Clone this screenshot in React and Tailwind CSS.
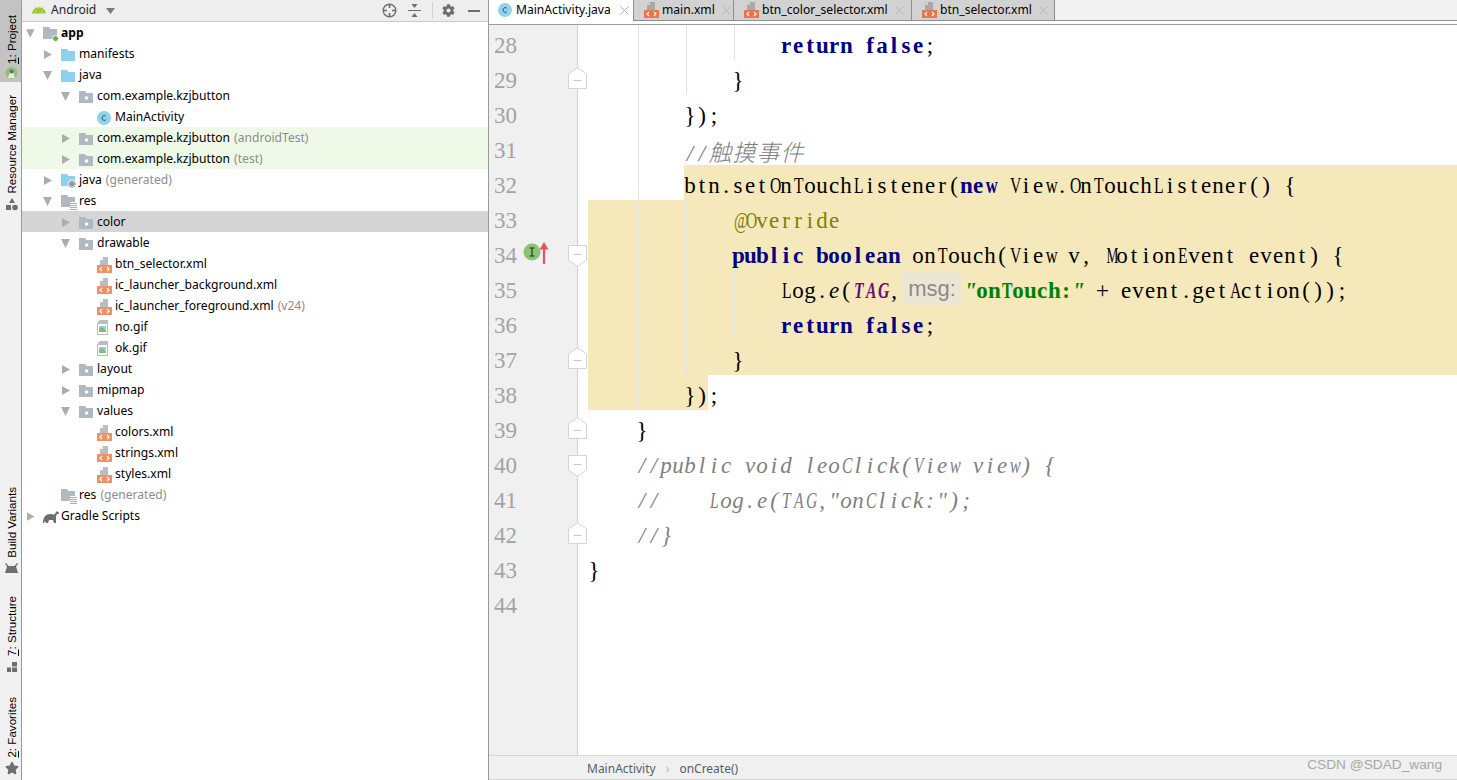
import React from "react";
import { FaAndroid, FaCog, FaStar } from "react-icons/fa";

const KW = "font-bold text-[#000080]";
const ANN = "text-[#808000]";
const STR = "font-bold text-[#008000]";
const FLD = "font-bold italic text-[#660e7a]";
const MTH = "italic";
const CMT = "italic text-[#808080]";

const WIDE = new Set("OTAGLVEDCRN@UHKQXYZ".split(""));

function narrow(c) {
  if (c === "M") return "scale-x-[0.58]";
  if (c === "W") return "scale-x-[0.55]";
  if (c === "m") return "scale-x-[0.66]";
  if (c === "w") return "scale-x-[0.72]";
  if (c === '"') return "italic";
  if (WIDE.has(c)) return "scale-x-[0.68]";
  return "";
}

function Ch({ c }) {
  const cjk = c.charCodeAt(0) > 0x2e80;
  if (cjk) return <span className="inline-block w-[24px] text-center font-['Noto_Sans_CJK_SC',serif] text-[23px] font-light">{c}</span>;
  return <span className={"inline-block w-[12px] text-center " + narrow(c)}>{c === " " ? "\u00a0" : c}</span>;
}

function T({ s, k = "" }) {
  return <span className={k}>{s.split("").map((c, i) => <Ch key={i} c={c} />)}</span>;
}

const Hint = () => (
  <span className="inline-block h-[33px] w-[60px] ml-[2px] mr-[2px] rounded-[3px] bg-[#ebe7d3] text-center align-top mt-[2px] font-['Liberation_Sans',sans-serif] text-[22px] leading-[33px] text-[#8a8a8a]">msg:</span>
);

const lines = [
  { n: 28, g: [60, 108, 156], t: [["                "], ["return false", KW], [";"]] },
  { n: 29, g: [60, 108], f: "up", t: [["            }"]] },
  { n: 30, g: [60], t: [["        });"]] },
  { n: 31, g: [60], t: [["        "], ["//触摸事件", CMT]] },
  { n: 32, g: [60], sel: "from", t: [["btn.setOnTouchListener("], ["new", KW], [" View.OnTouchListener() {"]] },
  { n: 33, g: [60, 108], sel: "full", t: [["            "], ["@Override", ANN]] },
  { n: 34, g: [60, 108], sel: "full", f: "down", mark: true, t: [["            "], ["public boolean", KW], [" onTouch(View v, MotionEvent event) {"]] },
  { n: 35, g: [60, 108, 156], sel: "full", t: [["                Log."], ["e", MTH], ["("], ["TAG", FLD], [","], "hint", ["\"onTouch:\"", STR], [" + event.getAction());"]] },
  { n: 36, g: [60, 108, 156], sel: "full", t: [["                "], ["return false", KW], [";"]] },
  { n: 37, g: [60, 108], sel: "full", f: "up", t: [["            }"]] },
  { n: 38, g: [60], sel: "short", t: [["        });"]] },
  { n: 39, g: [], f: "up", t: [["    }"]] },
  { n: 40, g: [], f: "down", t: [["    "], ["//public void leoClick(View view) {", CMT]] },
  { n: 41, g: [], t: [["    "], ["//    Log.e(TAG,\"onClick:\");", CMT]] },
  { n: 42, g: [], f: "up", t: [["    "], ["//}", CMT]] },
  { n: 43, g: [], t: [["}"]] },
  { n: 44, g: [], t: [[""]] },
];

const Fold = ({ dir }) => (
  <svg className={"absolute left-[79px] w-[19px] h-[22px] " + (dir === "up" ? "top-[7px]" : "top-[10px]")} viewBox="0 0 19 22">
    {dir === "up"
      ? <path d="M.5 21.5V7L9.5.7 18.5 7v14.5z" fill="#fff" stroke="#d4d4d4" />
      : <path d="M.5.5V15l9 6.3 9-6.3V.5z" fill="#fff" stroke="#d4d4d4" />}
    <path d={dir === "up" ? "M5.5 13.5h8" : "M5.5 9.5h8"} stroke="#c8c8c8" />
  </svg>
);

const RunMark = () => (
  <svg className="w-[27px] h-[24px]" viewBox="0 0 27 24">
    <circle cx="9" cy="11" r="8.5" fill="#8cc474" />
    <path d="M6.5 7h5M6.5 15h5M9 7v8" stroke="#3f5a38" strokeWidth="1.6" />
    <path d="M21 23V6" stroke="#e0575f" strokeWidth="2.2" />
    <path d="M16.5 8.5L21 1l4.5 7.5z" fill="#e0575f" />
  </svg>
);

function Row({ l }) {
  const content = (
    <div className="whitespace-nowrap">
      {l.t.map((p, i) => p === "hint" ? <Hint key={i} /> : <T key={i} s={p[0]} k={p[1] || ""} />)}
    </div>
  );
  let code;
  if (l.sel === "from") code = <div className="ml-[106px] h-[35px] bg-[#f5e9bc]">{content}</div>;
  else if (l.sel === "full") code = <div className="ml-[10px] h-[35px] bg-[#f5e9bc]">{content}</div>;
  else if (l.sel === "short") code = <div className="ml-[10px] h-[35px] w-[120px] bg-[#f5e9bc]">{content}</div>;
  else code = <div className="ml-[10px] h-[35px]">{content}</div>;
  return (
    <div className="relative flex h-[35px] shrink-0">
      <div className="flex h-[35px] w-[89px] shrink-0 items-center border-r border-[#d0d0d0] bg-[#f0f0f0] pl-[5px]">
        <span className="w-[29px] pt-[7px] font-['Liberation_Serif',serif] text-[23px] leading-[30px] text-[#a3a3a3]">{l.n}</span>
        {l.mark && <RunMark />}
      </div>
      <div className="relative min-w-0 flex-1 font-['Liberation_Serif',serif] text-[23px] leading-[42px] text-black">
        {code}
        {l.g.map((x) => (
          <span key={x} className="absolute top-0 h-[35px] w-px bg-[#e3e2dc]" style={{ left: x }} />
        ))}
      </div>
      {l.f && <Fold dir={l.f} />}
    </div>
  );
}

const Arrow = ({ d }) => (
  <svg className="h-[11px] w-[18px]" viewBox="0 0 18 11">
    {d === "down" ? <path d="M0 1h9L4.5 10z" fill="#adadad" /> : d === "right" ? <path d="M1 1v9l8-4.5z" fill="#adadad" /> : null}
  </svg>
);

const Folder = ({ c = "#aeb9c0", dot = true }) => (
  <svg className="h-[14px] w-[15px]" viewBox="0 0 15 14">
    <path d="M0 1h6l1.5 2H14v10H0z" fill={c} />
    {dot && <circle cx="7.5" cy="8" r="1.8" fill="#fff" />}
  </svg>
);
const AppFolder = () => (
  <svg className="h-[16px] w-[16px]" viewBox="0 0 16 16">
    <path d="M0 1h6l1.5 2H14v10H0z" fill="#aeb9c0" />
    <circle cx="12.5" cy="12.5" r="3" fill="#62b543" stroke="#fff" />
  </svg>
);
const GenFolder = () => (
  <svg className="h-[16px] w-[16px]" viewBox="0 0 16 16">
    <path d="M0 1h6l1.5 2H14v10H0z" fill="#8ed1ee" />
    <circle cx="11" cy="11" r="4.5" fill="#fff" />
    <path d="M11 7v8M7 11h8M8.2 8.2l5.6 5.6M13.8 8.2l-5.6 5.6" stroke="#8a9aa3" strokeWidth="1.3" />
  </svg>
);
const ResFolder = () => (
  <svg className="h-[16px] w-[17px]" viewBox="0 0 17 16">
    <path d="M0 1h6l1.5 2H14v10H0z" fill="#aeb9c0" />
    <path d="M9 8h7v8H9z" fill="#fff" />
    <path d="M9 9.5h7M9 11.5h7M9 13.5h7M9 15.5h7" stroke="#e8a33d" />
  </svg>
);
const XmlIcon = () => (
  <svg className="h-[16px] w-[15px]" viewBox="0 0 15 16">
    <path d="M6 0h5v8H3V3z" fill="#b8bfc4" />
    <path d="M6 0v3H3z" fill="#fff" />
    <rect x="0" y="8" width="15" height="8" fill="#ee9166" />
    <path d="M5 10l-2 2 2 2M10 10l2 2-2 2" fill="none" stroke="#fff" strokeWidth="1.1" />
  </svg>
);
const GifIcon = () => (
  <svg className="h-[15px] w-[12px]" viewBox="0 0 12 15">
    <path d="M3 0h8v3H1v-1z" fill="#b8bfc4" />
    <rect x=".5" y="3.5" width="10" height="11" fill="#fff" stroke="#b8bfc4" />
    <rect x="2" y="6" width="7" height="3" fill="#8ed1ee" />
    <path d="M2 9l3-2 4 3v2H2z" fill="#7fc06a" />
  </svg>
);
const ClassIcon = ({ s = 14 }) => (
  <svg style={{ width: s, height: s }} viewBox="0 0 14 14">
    <circle cx="7" cy="7" r="7" fill="#8fd3ee" />
    <path d="M8.8 5.1A2.4 2.4 0 1 0 8.8 8.9" fill="none" stroke="#37535f" strokeWidth="1" />
  </svg>
);
const Gradle = () => (
  <svg className="h-[14px] w-[17px]" viewBox="0 0 17 14">
    <path d="M0 13c0-6 3-9 7-9 2 0 4 1 5 0l1-2c1-1 3 0 3 1s-1 1-2 1l-1 2 0 7h-2l-1-3H6l-1 3H3l-1-2-1 2z" fill="#6e6e6e" />
  </svg>
);

const treeRows = [
  [0, "down", <AppFolder />, "app", null, "bold"],
  [1, "right", <Folder c="#8ed1ee" dot={false} />, "manifests"],
  [1, "down", <Folder c="#8ed1ee" dot={false} />, "java"],
  [2, "down", <Folder />, "com.example.kzjbutton"],
  [3, null, <ClassIcon />, "MainActivity"],
  [2, "right", <Folder />, "com.example.kzjbutton", "(androidTest)", "green"],
  [2, "right", <Folder />, "com.example.kzjbutton", "(test)", "green"],
  [1, "right", <GenFolder />, "java", "(generated)"],
  [1, "down", <ResFolder />, "res"],
  [2, "right", <Folder />, "color", null, "sel"],
  [2, "down", <Folder />, "drawable"],
  [3, null, <XmlIcon />, "btn_selector.xml"],
  [3, null, <XmlIcon />, "ic_launcher_background.xml"],
  [3, null, <XmlIcon />, "ic_launcher_foreground.xml", "(v24)"],
  [3, null, <GifIcon />, "no.gif"],
  [3, null, <GifIcon />, "ok.gif"],
  [2, "right", <Folder />, "layout"],
  [2, "right", <Folder />, "mipmap"],
  [2, "down", <Folder />, "values"],
  [3, null, <XmlIcon />, "colors.xml"],
  [3, null, <XmlIcon />, "strings.xml"],
  [3, null, <XmlIcon />, "styles.xml"],
  [1, null, <ResFolder />, "res", "(generated)"],
  [0, "right", <Gradle />, "Gradle Scripts"],
];

const pads = ["pl-[4px]", "pl-[21px]", "pl-[39px]", "pl-[57px]"];

function TreeRow({ r }) {
  const [lv, arrow, icon, text, extra, mode] = r;
  const bg = mode === "green" ? "bg-[#eff9e7]" : mode === "sel" ? "bg-[#d5d5d5]" : "";
  return (
    <div className={"flex h-[21px] items-center pt-[2px] " + pads[lv] + " " + bg}>
      <span className={"flex shrink-0 items-center " + (lv === 0 ? "w-[17px]" : "w-[18px]")}><Arrow d={arrow} /></span>
      <span className="flex w-[18px] shrink-0 items-center">{icon}</span>
      <span className={"whitespace-nowrap text-black " + (mode === "bold" ? "font-bold" : "")}>{text}</span>
      {extra && <span className="ml-[4px] whitespace-nowrap text-[#8c8c8c]">{extra}</span>}
    </div>
  );
}

const V = ({ children }) => (
  <span className="rotate-180 whitespace-nowrap font-['Liberation_Sans',sans-serif] text-[11.6px] leading-[14px] text-black [writing-mode:vertical-rl]">{children}</span>
);

function Rail() {
  return (
    <div className="flex h-full w-[22px] shrink-0 flex-col justify-between border-r border-[#999] bg-[#f1f1f1]">
      <div className="flex flex-col items-center">
        <div className="flex h-[82px] w-full flex-col items-center bg-[#c3c3c3] pl-[2px] pt-[15px]">
          <V><u>1</u>: Project</V>
          <svg className="mt-[3px] h-[12px] w-[13px]" viewBox="0 0 13 12">
            <circle cx="6.5" cy="6" r="6" fill="#8cc474" />
            <path d="M3 11l2-6h3l2 6z" fill="#e8e8e8" />
            <circle cx="6.5" cy="4.5" r="2" fill="#6e6e6e" />
          </svg>
        </div>
        <div className="mt-[13px] flex flex-col items-center pl-[2px]">
          <V>Resource Manager</V>
          <svg className="mt-[4px] h-[13px] w-[12px]" viewBox="0 0 12 13">
            <path d="M6 0l3 5H3z" fill="#6e6e6e" />
            <rect x="0" y="7" width="5" height="5" fill="#6e6e6e" />
            <circle cx="9" cy="9.5" r="2.8" fill="#6e6e6e" />
          </svg>
        </div>
      </div>
      <div className="flex flex-col items-center pb-[5px] pl-[2px]">
        <V>Build Variants</V>
        <svg className="mb-[23px] mt-[6px] h-[10px] w-[13px]" viewBox="0 0 13 10">
          <path d="M1 0l2.5 3h6L12 0l1 .5L11 3.500 13 10H0l2-6.500L0 .5z" fill="#6e6e6e" />
        </svg>
        <V><u>7</u>: Structure</V>
        <svg className="mb-[25px] mt-[6px] h-[10px] w-[10px]" viewBox="0 0 10 10">
          <rect x="5" y="0" width="5" height="4.500" fill="#6e6e6e" />
          <rect x="0" y="5.500" width="4" height="4.500" fill="#6e6e6e" />
          <rect x="5" y="5.500" width="5" height="4.500" fill="#6e6e6e" />
        </svg>
        <V><u>2</u>: Favorites</V>
        <FaStar className="mt-[3px] text-[14px] text-[#6e6e6e]" />
      </div>
    </div>
  );
}

function ProjectPanel() {
  return (
    <div className="flex h-full w-[467px] shrink-0 flex-col border-r border-[#999] bg-white font-['Noto_Sans',sans-serif] text-[12.1px]">
      <div className="flex h-[22px] shrink-0 items-center border-b border-[#c9c9c9] bg-[#eeeeee] pl-[10px] pr-[8px]">
        <FaAndroid className="h-[15px] w-[14px] text-[#a4c639]" />
        <span className="ml-[5px] text-[#1f1f1f]">Android</span>
        <svg className="ml-[10px] h-[6px] w-[9px]" viewBox="0 0 9 6"><path d="M0 0h9L4.5 6z" fill="#7a7a7a" /></svg>
        <div className="flex-1" />
        <svg className="h-[15px] w-[15px]" viewBox="0 0 15 15">
          <circle cx="7.5" cy="7.5" r="6.3" fill="none" stroke="#6e6e6e" strokeWidth="1.4" />
          <path d="M7.5 1v4M7.5 10v4M1 7.5h4M10 7.5h4" stroke="#6e6e6e" strokeWidth="1.6" />
        </svg>
        <svg className="ml-[11px] h-[13px] w-[13px]" viewBox="0 0 13 13">
          <path d="M0 6.5h13" stroke="#6e6e6e" />
          <path d="M3.5 0h6L6.5 4zM3.5 13h6l-3-4z" fill="#6e6e6e" />
        </svg>
        <span className="ml-[11px] h-[17px] w-px bg-[#d2d2d2]" />
        <FaCog className="ml-[9px] h-[13px] w-[13px] text-[#6e6e6e]" />
        <span className="ml-[13px] h-[2px] w-[12px] bg-[#6e6e6e]" />
      </div>
      <div className="flex flex-col">
        {treeRows.map((r, i) => <TreeRow key={i} r={r} />)}
      </div>
    </div>
  );
}

const X = () => (
  <svg className="h-[9px] w-[9px] shrink-0" viewBox="0 0 9 9"><path d="M.5.5l8 8M8.5.5l-8 8" stroke="#b5b5b5" /></svg>
);

const TabIcon = () => (
  <svg className="h-[16px] w-[15px] shrink-0" viewBox="0 0 15 16">
    <path d="M6 0h5v8H3V3z" fill="#a9a9a9" />
    <path d="M6 0v3H3z" fill="#d2d2d2" />
    <rect x="0" y="8" width="15" height="8" fill="#e9764a" />
    <path d="M5 10l-2 2 2 2M10 10l2 2-2 2" fill="none" stroke="#fff" strokeWidth="1.1" />
  </svg>
);

function InTab({ w, label }) {
  return (
    <div className={"flex h-[20px] items-center gap-[3px] border-r border-[#8e8e8e] bg-[#d2d2d2] pl-[10px] " + w}>
      <TabIcon />
      <span className="whitespace-nowrap">{label}</span>
      <span className="ml-[4px]"><X /></span>
    </div>
  );
}

function Tabs() {
  return (
    <div className="relative h-[25px] shrink-0 border-b border-[#9c9c9c] bg-white font-['Noto_Sans',sans-serif] text-[12.1px] text-black">
      <div className="flex h-[21px] border-b border-[#8e8e8e] bg-[#f2f2f2]">
        <div className="z-10 flex h-[24px] w-[144px] items-center gap-[4px] bg-white pb-[4px] pl-[9px]">
          <ClassIcon s={14} />
          <span className="whitespace-nowrap">MainActivity.java</span>
          <span className="ml-[5px]"><X /></span>
        </div>
        <InTab w="w-[101px] border-l" label="main.xml" />
        <InTab w="w-[178px]" label="btn_color_selector.xml" />
        <InTab w="w-[143px]" label="btn_selector.xml" />
      </div>
    </div>
  );
}

function Editor() {
  return (
    <div className="flex h-full min-w-0 flex-1 flex-col">
      <Tabs />
      <div className="flex min-h-0 flex-1 flex-col overflow-hidden">
        {lines.map((l) => <Row key={l.n} l={l} />)}
        <div className="flex flex-1">
          <div className="w-[89px] border-r border-[#d0d0d0] bg-[#f0f0f0]" />
        </div>
      </div>
      <div className="flex h-[25px] shrink-0 items-center border-b border-t border-[#d6d6d6] bg-[#f0f0f0] pl-[98px] pr-[15px] font-['Noto_Sans',sans-serif] text-[12px] text-[#55606a]">
        <span className="pt-[2px]">MainActivity</span>
        <span className="mx-[10px] pt-[2px] text-[#b0b0b0]">›</span>
        <span className="pt-[2px]">onCreate()</span>
        <div className="flex-1" />
        <span className="mb-[5px] font-['Liberation_Sans',sans-serif] text-[13.7px] text-[#a8a8a8]">CSDN @SDAD_wang</span>
      </div>
    </div>
  );
}

export default function App() {
  return (
    <div className="flex h-[780px] w-[1457px] overflow-hidden bg-white">
      <Rail />
      <ProjectPanel />
      <Editor />
    </div>
  );
}
